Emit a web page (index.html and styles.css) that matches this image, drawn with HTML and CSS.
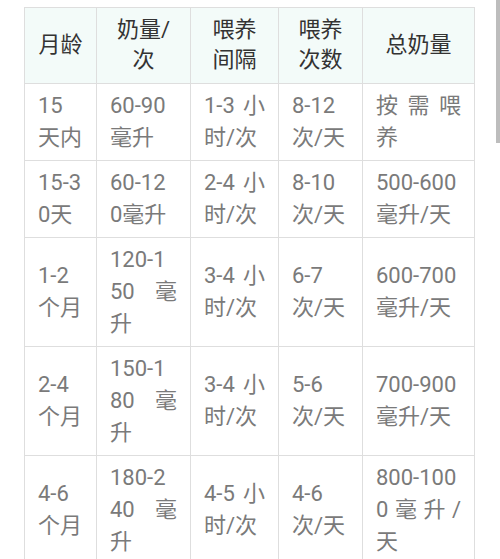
FILE: index.html
```html
<!DOCTYPE html>
<html lang="zh">
<head>
<meta charset="utf-8">
<link rel="stylesheet" href="styles.css">
</head>
<body>
<div class="page">
<table class="feed">
<colgroup>
<col class="c1"><col class="c2"><col class="c3"><col class="c4"><col class="c5">
</colgroup>
<thead>
<tr><th>月龄</th><th>奶量/次</th><th>喂养间隔</th><th>喂养次数</th><th>总奶量</th></tr>
</thead>
<tbody>
<tr><td>15天内</td><td>60-90毫升</td><td>1-3 小时/次</td><td>8-12次/天</td><td>按需喂养</td></tr>
<tr><td>15-30天</td><td>60-120毫升</td><td>2-4 小时/次</td><td>8-10次/天</td><td>500-600毫升/天</td></tr>
<tr><td>1-2个月</td><td>120-150 毫升</td><td>3-4 小时/次</td><td>6-7次/天</td><td>600-700毫升/天</td></tr>
<tr><td>2-4个月</td><td>150-180 毫升</td><td>3-4 小时/次</td><td>5-6次/天</td><td>700-900毫升/天</td></tr>
<tr><td>4-6个月</td><td>180-240 毫升</td><td>4-5 小时/次</td><td>4-6次/天</td><td>800-1000毫升/天</td></tr>
</tbody>
</table>
</div>
<div class="scroll-thumb"></div>
</body>
</html>
```
FILE: styles.css
```css
html, body {
  margin: 0;
  padding: 0;
  background: #ffffff;
}
body {
  font-family: Roboto, "Noto Sans CJK SC", sans-serif;
  overflow: hidden;
}
.page {
  padding: 7px 0 0 24px;
}
.feed {
  border-collapse: collapse;
  table-layout: fixed;
  width: 450px;
  font-size: 22px;
}
.c1 { width: 72px; }
.c2 { width: 94px; }
.c3 { width: 88px; }
.c4 { width: 84px; }
.c5 { width: 112px; }
.feed th, .feed td {
  border: 1px solid #dedede;
  padding: 6px 13px;
  word-break: break-all;
  text-align: justify;
  vertical-align: middle;
}
.feed th {
  background: #f3fbf9;
  color: #333333;
  font-weight: normal;
  text-align: center;
  line-height: 30px;
  padding: 7px 13px 8px;
}
.feed td {
  color: #7a7a7a;
  line-height: 32px;
}
.scroll-thumb {
  position: absolute;
  top: 0;
  right: 0;
  width: 4px;
  height: 143px;
  background: #bdbdbd;
}
```
